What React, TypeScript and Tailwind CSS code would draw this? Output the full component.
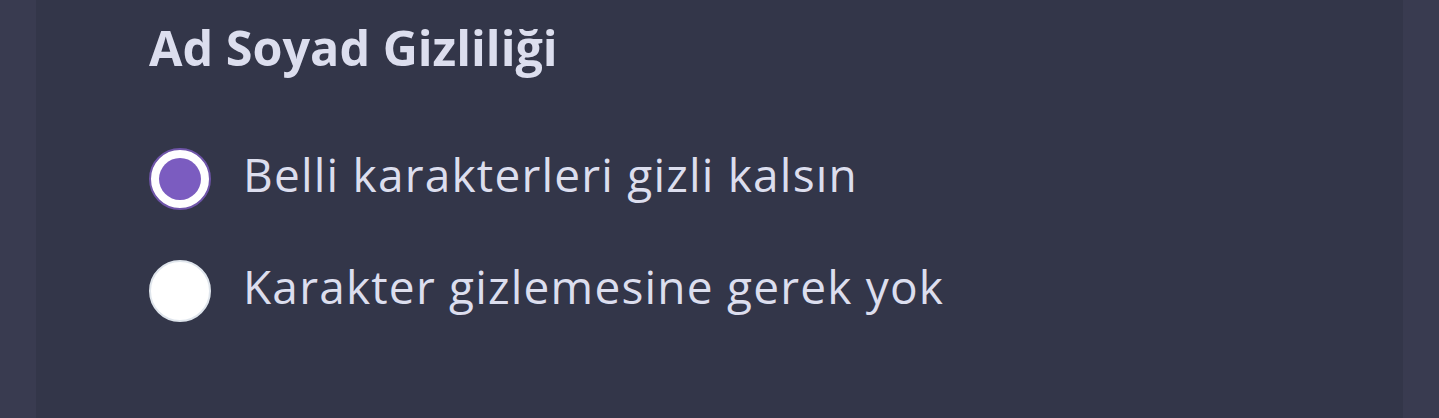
import React, { useState } from "react";

const options = [
  { id: "partial", label: "Belli karakterleri gizli kalsın" },
  { id: "none", label: "Karakter gizlemesine gerek yok" },
];

export default function App() {
  const [selected, setSelected] = useState("partial");

  return (
    <div
      className="flex min-h-[418px] w-full bg-[#393b50] px-[36px]"
      style={{ fontFamily: '"Open Sans", sans-serif' }}
    >
      <div className="flex-1 bg-[#333649] pl-[113px] pt-[19px]">
        <h2 className="text-[48.5px] font-bold leading-[56px] text-[#dcdeee]">
          Ad Soyad Gizliliği
        </h2>
        <div className="mt-[73px] flex flex-col gap-[50px]">
          {options.map((opt) => {
            const active = selected === opt.id;
            return (
              <button
                key={opt.id}
                onClick={() => setSelected(opt.id)}
                className="flex h-[62px] items-center gap-[32px] text-left"
              >
                {active ? (
                  <span className="flex h-[62px] w-[62px] shrink-0 items-center justify-center rounded-full border-[2px] border-[#6f55a9] bg-white">
                    <span className="h-[42px] w-[42px] rounded-full bg-[#7b5cc0]" />
                  </span>
                ) : (
                  <span className="h-[62px] w-[62px] shrink-0 rounded-full border-[2px] border-[#dfe5ec] bg-white" />
                )}
                <span className="mb-[10px] text-[46px] leading-[62px] tracking-[1.2px] text-[#dcdeee]">
                  {opt.label}
                </span>
              </button>
            );
          })}
        </div>
      </div>
    </div>
  );
}
